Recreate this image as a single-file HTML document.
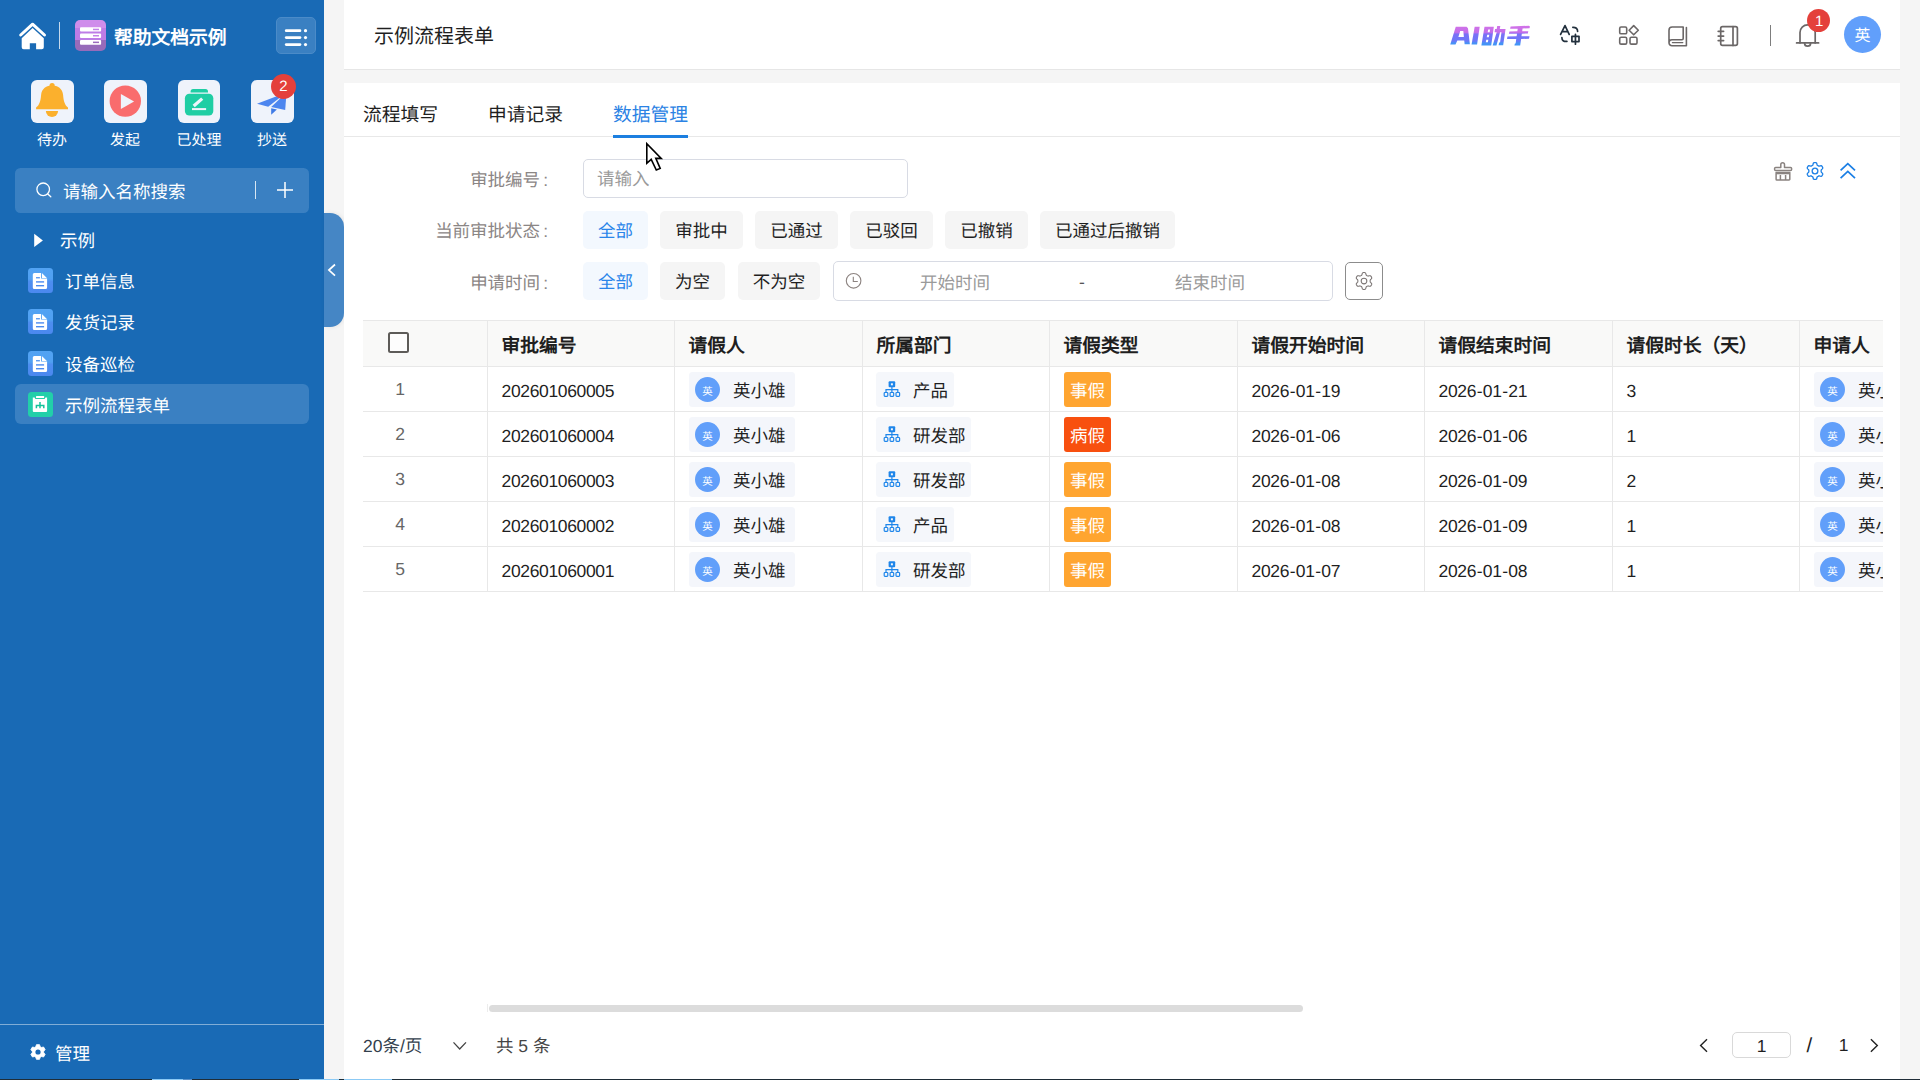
<!DOCTYPE html>
<html lang="zh-CN">
<head>
<meta charset="utf-8">
<title>示例流程表单</title>
<style>
*{box-sizing:border-box;margin:0;padding:0}
html,body{width:1920px;height:1080px;overflow:hidden;background:#f5f5f5;font-family:"Liberation Sans",sans-serif;color:#1f1f1f;font-size:17.5px;text-rendering:geometricPrecision}
.a{position:absolute;white-space:nowrap}
svg{display:block;overflow:visible}
/* ---------- sidebar ---------- */
#side{position:absolute;left:0;top:0;width:324px;height:1080px;background:#196ab5;color:#fff}
#side .t{position:absolute;white-space:nowrap;color:#fff}
.tile{position:absolute;top:80px;width:42.5px;height:43px;border-radius:6px;background:#eff3fb}
.qlab{position:absolute;top:130px;width:80px;text-align:center;font-size:15px;line-height:22px;color:#fff}
.mi{position:absolute;left:28px;width:25px;height:25px;border-radius:3.5px;background:linear-gradient(180deg,#52a3f3 0,#50a0f2 44%,#4d8ef0 54%,#4b88ef 100%)}
.mt{position:absolute;left:65px;font-size:17.5px;line-height:26px;color:#fff;white-space:nowrap}
/* ---------- main ---------- */
#hdr{position:absolute;left:344px;top:0;width:1556px;height:70px;background:#fff;border-bottom:1px solid #e6e6e6}
#panel{position:absolute;left:344px;top:83px;width:1556px;height:997px;background:#fff}
.tab{position:absolute;top:102px;font-size:18.75px;line-height:26px;color:#1f1f1f;white-space:nowrap}
.flab{position:absolute;left:380px;width:168px;text-align:right;font-size:17.5px;line-height:26px;color:#8b8685;white-space:nowrap}
.cl{margin-left:3px}
.chip{position:absolute;height:38px;border-radius:5px;background:#f5f5f5;color:#1f1f1f;font-size:17.5px;line-height:40px;text-align:center;white-space:nowrap}
.chip.on{background:#f3f8fe;color:#2a85ea}
/* ---------- table ---------- */
#tbl{position:absolute;left:363px;top:320px;width:1520px;height:272px;overflow:hidden}
.th{position:absolute;top:0;height:47px;background:#f9f9f8;border-top:1px solid #e8e8e8;border-bottom:1px solid #e8e8e8;border-right:1px solid #e8e8e8;font-weight:bold;font-size:18.75px;line-height:50px;padding-left:13.5px;color:#1f1f1f;white-space:nowrap}
.tr{position:absolute;left:0;width:1700px;height:45px;border-bottom:1px solid #e8e8e8}
.td{position:absolute;top:0;height:44px;border-right:1px solid #e8e8e8;font-size:17.5px;line-height:49px;padding-left:13.5px;color:#1f1f1f;white-space:nowrap}
.num{letter-spacing:-0.35px}
.num i{font-style:normal;margin:0 .65px}
.uchip{position:absolute;top:5px;left:14px;width:105.5px;height:34.5px;border-radius:3.5px;background:#f4f6fb}
.uchip i{position:absolute;left:6px;top:5px;width:25px;height:25px;border-radius:50%;background:#619ffa;color:#fff;font-style:normal;font-size:10.5px;line-height:31px;text-align:center}
.uchip b{position:absolute;left:44px;top:0;font-weight:normal;font-size:17.5px;line-height:39px;color:#1f1f1f}
.dchip{position:absolute;top:5px;left:13px;height:34.5px;border-radius:3.5px;background:#f5f7fb}
.org{position:absolute;left:7.2px;top:9px;width:18px;height:17px}
.dchip b{position:absolute;left:37px;top:0;font-weight:normal;font-size:17.5px;line-height:39px;color:#1f1f1f}
.tag{position:absolute;top:5px;left:14px;width:47px;height:35px;border-radius:3px;background:#ffa530;color:#fff;font-size:17.5px;line-height:39px;text-align:center}
.tag.r{background:#f8500f}
</style>
</head>
<body>

<svg width="0" height="0" style="position:absolute">
  <defs>
    <symbol id="org" viewBox="0 0 18 17" overflow="visible">
      <rect x="5.6" y="0.2" width="6.6" height="6" rx="1" fill="#1f86ea"/>
      <rect x="7.9" y="2.3" width="2" height="2" fill="#f5f7fb"/>
      <path d="M8.9 6 V8.6 M3 11.2 V8.6 H14.8 V11.2 M8.9 8.6 V11.2" fill="none" stroke="#1f86ea" stroke-width="1.2"/>
      <rect x="1.2" y="11.5" width="3.6" height="3.9" rx=".8" fill="#f5f7fb" stroke="#1f86ea" stroke-width="1.2"/>
      <rect x="7.1" y="11.5" width="3.6" height="3.9" rx=".8" fill="#f5f7fb" stroke="#1f86ea" stroke-width="1.2"/>
      <rect x="13" y="11.5" width="3.6" height="3.9" rx=".8" fill="#f5f7fb" stroke="#1f86ea" stroke-width="1.2"/>
    </symbol>
    <symbol id="gearo" viewBox="-10 -10 20 20" overflow="visible">
      <path d="M6.15 0.00 L6.15 -0.40 L6.17 -0.81 L6.37 -1.27 L7.05 -1.89 L7.68 -2.61 L7.74 -3.21 L7.57 -3.73 L7.32 -4.22 L7.02 -4.69 L6.65 -5.10 L6.10 -5.35 L5.16 -5.16 L4.28 -4.88 L3.79 -4.94 L3.42 -5.12 L3.08 -5.33 L2.73 -5.53 L2.38 -5.75 L2.09 -6.15 L1.89 -7.05 L1.58 -7.95 L1.09 -8.31 L0.55 -8.42 L0.00 -8.45 L-0.55 -8.42 L-1.09 -8.31 L-1.58 -7.95 L-1.89 -7.05 L-2.09 -6.15 L-2.38 -5.75 L-2.73 -5.53 L-3.07 -5.33 L-3.42 -5.12 L-3.79 -4.94 L-4.28 -4.88 L-5.16 -5.16 L-6.10 -5.35 L-6.65 -5.10 L-7.02 -4.69 L-7.32 -4.22 L-7.57 -3.73 L-7.74 -3.21 L-7.68 -2.61 L-7.05 -1.89 L-6.37 -1.27 L-6.17 -0.81 L-6.15 -0.40 L-6.15 -0.00 L-6.15 0.40 L-6.17 0.81 L-6.37 1.27 L-7.05 1.89 L-7.68 2.61 L-7.74 3.21 L-7.57 3.73 L-7.32 4.22 L-7.02 4.69 L-6.65 5.10 L-6.10 5.35 L-5.16 5.16 L-4.28 4.88 L-3.79 4.94 L-3.42 5.12 L-3.08 5.33 L-2.73 5.53 L-2.38 5.75 L-2.09 6.15 L-1.89 7.05 L-1.58 7.95 L-1.09 8.31 L-0.55 8.42 L-0.00 8.45 L0.55 8.42 L1.09 8.31 L1.58 7.95 L1.89 7.05 L2.09 6.15 L2.38 5.75 L2.73 5.53 L3.08 5.33 L3.42 5.12 L3.79 4.94 L4.28 4.88 L5.16 5.16 L6.10 5.35 L6.65 5.10 L7.02 4.69 L7.32 4.23 L7.57 3.73 L7.74 3.21 L7.68 2.61 L7.05 1.89 L6.37 1.27 L6.17 0.81 L6.15 0.40Z" fill="none" stroke="currentColor" stroke-linejoin="round"/>
      <circle cx="0" cy="0" r="2.85" fill="none" stroke="currentColor"/>
    </symbol>
    <symbol id="doc" viewBox="0 0 25 25" overflow="visible">
      <path d="M6.3 5.1 H13 V10.6 H19.1 V19.6 a1.5 1.5 0 0 1 -1.5 1.5 H6.3 a1.5 1.5 0 0 1 -1.5 -1.5 V6.6 a1.5 1.5 0 0 1 1.5 -1.5 Z" fill="#fff"/>
      <path d="M13.9 5.1 L18.9 10 H13.9 Z" fill="#fff"/>
      <rect x="8" y="9.1" width="3.9" height="1.3" fill="#4f93f1"/>
      <rect x="8" y="13.2" width="8.1" height="1.4" fill="#4c8bf0"/>
      <rect x="8" y="17" width="8.1" height="1.4" fill="#4c8bf0"/>
    </symbol>
  </defs>
</svg>

<!-- ================= SIDEBAR ================= -->
<div id="side">
  <div class="t" style="left:114px;top:24px;font-size:18.75px;font-weight:bold;line-height:28px">帮助文档示例</div>
  <div class="a" style="left:59px;top:22px;width:1px;height:27px;background:rgba(255,255,255,.75)"></div>
  <div class="a" style="left:276px;top:17px;width:40px;height:37px;border-radius:5px;background:#3a80c2;border:1px solid #4b8bc8"></div>

  <div class="tile" style="left:31px"></div>
  <div class="tile" style="left:104.3px"></div>
  <div class="tile" style="left:177.7px"></div>
  <div class="tile" style="left:251px"></div>
  <div class="qlab" style="left:12px">待办</div>
  <div class="qlab" style="left:85px">发起</div>
  <div class="qlab" style="left:159px">已处理</div>
  <div class="qlab" style="left:232px">抄送</div>
  <div class="a" style="left:271px;top:74px;width:25px;height:25px;border-radius:50%;background:#e4403b;color:#fff;font-size:15px;line-height:25px;text-align:center;z-index:5">2</div>

  <div class="a" style="left:15px;top:168px;width:294px;height:45px;border-radius:5.5px;background:#3a80c2"></div>
  <div class="t" style="left:63px;top:179px;font-size:17.5px;line-height:26px">请输入名称搜索</div>
  <div class="a" style="left:255px;top:181px;width:1px;height:18px;background:rgba(255,255,255,.8)"></div>

  <div class="t" style="left:60px;top:228px;font-size:17.5px;line-height:26px">示例</div>

  <div class="a" style="left:15px;top:384px;width:294px;height:40px;border-radius:6px;background:#3a80c2"></div>
  <div class="mi" style="top:268px"><svg width="25" height="25"><use href="#doc"/></svg></div><div class="mt" style="top:269px">订单信息</div>
  <div class="mi" style="top:309px"><svg width="25" height="25"><use href="#doc"/></svg></div><div class="mt" style="top:310px">发货记录</div>
  <div class="mi" style="top:351px"><svg width="25" height="25"><use href="#doc"/></svg></div><div class="mt" style="top:352px">设备巡检</div>
  <div class="mi" style="top:392px;background:#22cfa9"><svg width="25" height="25" viewBox="0 0 25 25"><rect x="8" y="4" width="8.1" height="1.9" rx=".5" fill="#fff"/><path d="M4.8 5.6 L6.6 5.6 L7.4 7 H16.6 L17.4 5.6 L19.1 5.6 V19 a1 1 0 0 1 -1 1 H5.8 a1 1 0 0 1 -1 -1 Z" fill="#fff"/><path d="M12 10 V16.2 M8.4 16.2 V13.4 H15.8 V16.2" fill="none" stroke="#14c39b" stroke-width="1.5"/></svg></div><div class="mt" style="top:393px">示例流程表单</div>


  <!-- home -->
  <svg class="a" style="left:18px;top:22px" width="29" height="28" viewBox="0 0 29 28">
    <polyline points="2.7,13 14.6,2.2 26.5,13" fill="none" stroke="#fff" stroke-width="3" stroke-linecap="round" stroke-linejoin="round"/>
    <path d="M14.6 6 L25.8 16.2 V25.3 a2 2 0 0 1 -2 2 H18.1 V21.2 H11.8 V27.3 H5.7 a2 2 0 0 1 -2 -2 V16.2 Z" fill="#fff"/>
  </svg>
  <!-- app icon -->
  <div class="a" style="left:75px;top:20px;width:31px;height:31px;border-radius:5px;background:linear-gradient(180deg,#cf8deb 0,#cf8deb 26%,#bd7ce6 26%,#bd7ce6 64%,#976bba 64%,#976bba 100%)">
    <svg width="31" height="31" viewBox="0 0 31 31">
      <rect x="5" y="7.2" width="21.1" height="4.4" rx="1" fill="#fff"/>
      <rect x="5" y="13.5" width="21.1" height="4.5" rx="1" fill="#fff"/>
      <rect x="5" y="20" width="21.1" height="4.7" rx="1" fill="#fff"/>
      <rect x="18" y="8.7" width="6" height="1.5" fill="#c383e8"/>
      <rect x="18" y="15" width="6" height="1.5" fill="#c383e8"/>
      <rect x="18" y="21.6" width="6" height="1.5" fill="#9a6cbd"/>
    </svg>
  </div>
  <!-- toggle -->
  <svg class="a" style="left:276px;top:17px" width="40" height="37" viewBox="0 0 40 37">
    <g stroke="#fff" stroke-width="2.7" stroke-linecap="round">
      <line x1="10.2" y1="13.7" x2="24" y2="13.7"/><line x1="10.2" y1="20.6" x2="24" y2="20.6"/><line x1="10.2" y1="27.6" x2="24" y2="27.6"/>
    </g>
    <circle cx="29.5" cy="13.7" r="1.6" fill="#fff"/><circle cx="29.5" cy="20.6" r="1.6" fill="#fff"/><circle cx="29.5" cy="27.6" r="1.6" fill="#fff"/>
  </svg>
  <!-- bell -->
  <svg class="a" style="left:31px;top:80px" width="43" height="43" viewBox="0 0 43 43">
    <circle cx="21.1" cy="5.6" r="2.6" fill="#fbb02d"/>
    <path d="M5.1 29.3 L5.1 27.6 C8.5 25 9.6 21 10.1 15 C10.6 8.5 15.5 5.5 21.1 5.5 C26.7 5.5 31.6 8.5 32.1 15 C32.6 21 33.7 25 37 27.6 L37 29.3 Z" fill="#fbb02d"/>
    <path d="M14.9 31 H27.1 A6.1 6.1 0 0 1 14.9 31 Z" fill="#fbb02d"/>
  </svg>
  <!-- play -->
  <svg class="a" style="left:104px;top:80px" width="43" height="43" viewBox="0 0 43 43">
    <circle cx="21.3" cy="21.1" r="15.7" fill="#f96c6d"/>
    <path d="M16.9 14.1 V28.9 L30.1 21.5 Z" fill="#eff3fb"/>
  </svg>
  <!-- done -->
  <svg class="a" style="left:178px;top:80px" width="43" height="43" viewBox="0 0 43 43">
    <path d="M12.6 12.6 V11.4 a2.5 2.5 0 0 1 2.5 -2.5 H27.5 a2.5 2.5 0 0 1 2.5 2.5 V12.6 Z" fill="#1fcea4"/>
    <rect x="6.9" y="13.7" width="28.4" height="21.9" rx="4.5" fill="#1fcea4"/>
    <line x1="15.7" y1="26" x2="24.2" y2="18.6" stroke="#f0f4fb" stroke-width="3.2"/>
    <rect x="14" y="28.1" width="14.1" height="2" fill="#f0f4fb"/>
  </svg>
  <!-- send -->
  <svg class="a" style="left:251px;top:80px" width="43" height="43" viewBox="0 0 43 43">
    <path d="M6 23.7 L35.5 12.5 L17.2 26.8 Z" fill="#4d86ef"/>
    <path d="M35.5 12.5 L34.2 30 L20.2 27 Z" fill="#4d86ef"/>
    <path d="M20.2 28.2 L25.9 29.4 L20.2 34.8 Z" fill="#3f7be6"/>
  </svg>
  <!-- search + plus -->
  <svg class="a" style="left:30px;top:178px" width="30" height="26" viewBox="0 0 30 26">
    <circle cx="13.2" cy="11.3" r="6.3" fill="none" stroke="#fff" stroke-width="1.3"/>
    <line x1="17.8" y1="16" x2="20.8" y2="18.8" stroke="#fff" stroke-width="1.3" stroke-linecap="round"/>
  </svg>
  <svg class="a" style="left:275px;top:180px" width="20" height="20" viewBox="0 0 20 20">
    <path d="M2 10 H18 M10 2 V18" stroke="#fff" stroke-width="1.5" fill="none"/>
  </svg>
  <!-- tree arrow -->
  <svg class="a" style="left:30px;top:230px" width="20" height="20" viewBox="0 0 20 20"><path d="M4.2 3.7 V17 L12.9 10.4 Z" fill="#fff"/></svg>
  <!-- gear bottom -->
  <svg class="a" style="left:29px;top:1043px" width="18" height="18" viewBox="-10 -10 20 20"><path d="M2.36 -5.95 L1.73 -8.12 L-1.73 -8.12 L-2.36 -5.95 L-3.98 -5.02 L-6.17 -5.55 L-7.89 -2.56 L-6.33 -0.93 L-6.33 0.93 L-7.89 2.56 L-6.17 5.55 L-3.98 5.02 L-2.36 5.95 L-1.73 8.12 L1.73 8.12 L2.36 5.95 L3.98 5.02 L6.17 5.55 L7.89 2.56 L6.33 0.93 L6.33 -0.93 L7.89 -2.56 L6.17 -5.55 L3.98 -5.02Z" fill="#fff" stroke="#fff" stroke-width="1" stroke-linejoin="round"/><circle cx="0" cy="0" r="2.9" fill="#1969b6"/></svg>
  <div class="a" style="left:0;top:1024px;width:324px;height:1px;background:rgba(255,255,255,.45)"></div>
  <div class="t" style="left:55px;top:1041px;font-size:17.5px;line-height:26px">管理</div>
</div>

<!-- collapse handle -->
<div class="a" style="left:324px;top:213px;width:20px;height:114px;border-radius:0 14px 14px 0;background:#4586c5;box-shadow:1px 0 4px rgba(0,0,0,.08)"></div>

<!-- ================= HEADER ================= -->
<div id="hdr"></div>
<div class="a" style="left:374px;top:23px;font-size:20px;line-height:28px;color:#1f1f1f">示例流程表单</div>
<div class="a" style="left:1770px;top:25px;width:1px;height:21px;background:#7d7d7d"></div>
<div class="a" style="left:1844px;top:16px;width:37px;height:37px;border-radius:50%;background:#619ffb;color:#fff;font-size:16px;line-height:42px;text-align:center">英</div>
<div class="a" style="left:1807.1px;top:9.2px;width:23px;height:23px;border-radius:50%;background:#e4403b;color:#fff;font-size:15px;line-height:26px;text-align:center;z-index:3;padding-left:1px">1</div>


<!-- AI logo -->
<svg class="a" style="left:1444px;top:18px" width="92" height="34" viewBox="0 0 1920 710">
  <defs><linearGradient id="ag" gradientUnits="userSpaceOnUse" x1="0" y1="165" x2="0" y2="575">
    <stop offset="0" stop-color="#d272e8"/><stop offset=".33" stop-color="#c26ee9"/><stop offset=".42" stop-color="#7a70f6"/><stop offset=".78" stop-color="#6a78f8"/><stop offset=".86" stop-color="#4a90f6"/><stop offset="1" stop-color="#3f98f6"/></linearGradient></defs>
  <g fill="url(#ag)" fill-rule="evenodd">
    <path d="M245 185 L470 185 L500 215 L540 550 L430 550 L422 470 L278 470 L240 555 L130 555 Z M338 270 L403 270 L415 395 L300 395 Z"/>
    <path d="M640 185 L745 185 L690 555 L575 555 Z"/>
    <path d="M845 185 L1040 185 L985 575 L780 575 Z M922 240 L962 240 L952 300 L912 300 Z M902 350 L945 350 L935 402 L892 402 Z M882 455 L925 455 L915 507 L872 507 Z"/>
    <path d="M1110 165 L1175 165 L1165 230 L1285 230 L1275 295 L1235 570 L1140 570 L1150 510 L1170 510 L1200 295 L1170 295 L1095 575 L1015 575 L1100 295 L1055 295 L1065 230 L1100 230 Z"/>
    <path d="M1390 180 L1770 160 L1795 175 L1785 215 L1640 218 L1632 277 L1760 275 L1750 325 L1625 327 L1617 383 L1785 380 L1775 435 L1610 437 L1590 575 L1470 575 L1480 530 L1495 530 L1508 438 L1315 440 L1325 385 L1516 383 L1524 328 L1355 330 L1365 280 L1531 278 L1539 222 L1380 225 Z"/>
  </g>
</svg>
<!-- translate -->
<svg class="a" style="left:1555px;top:20px" width="30" height="30" viewBox="0 0 30 30">
  <g fill="none" stroke="#22303d" stroke-width="1.7" stroke-linecap="round" stroke-linejoin="round">
    <path d="M5.6 14.4 L10 5.6 L14.2 14.4 M7 11.6 H12.8"/>
    <path d="M17.8 7.3 C20.8 7.1 22.7 8.6 22.6 11.4"/>
    <path d="M6.9 17.6 C6.8 20.4 8.8 21.8 11.9 21.4"/>
    <path d="M16.9 16.3 H24 V21.6 H16.9 Z M20.45 14.3 V24.2"/>
  </g>
</svg>
<!-- grid -->
<svg class="a" style="left:1613px;top:20px" width="30" height="30" viewBox="0 0 30 30">
  <g fill="none" stroke="#6b6767" stroke-width="1.6" stroke-linejoin="round">
    <rect x="6.7" y="7" width="7" height="6.8" rx="1.4"/>
    <rect x="6.7" y="17.3" width="7" height="6.8" rx="1.4"/>
    <rect x="17" y="17.3" width="7" height="6.8" rx="1.4"/>
    <path d="M20.7 5.6 L25.3 10.2 L20.7 14.8 L16.1 10.2 Z"/>
  </g>
</svg>
<!-- book -->
<svg class="a" style="left:1663px;top:20px" width="30" height="30" viewBox="0 0 30 30">
  <g fill="none" stroke="#6b6767" stroke-width="1.6" stroke-linecap="round" stroke-linejoin="round">
    <path d="M23.4 7.5 V25.7 H9 a3 3 0 0 1 0 -6 H19 a1.2 1.2 0 0 0 1.2 -1.2 V7 H9.2 a3.2 3.2 0 0 0 -3.2 3.2 V22.7"/>
    <path d="M9.4 22.6 H19.8" stroke-width="1.3"/>
  </g>
</svg>
<!-- notebook -->
<svg class="a" style="left:1713px;top:20px" width="30" height="30" viewBox="0 0 30 30">
  <g fill="none" stroke="#6b6767" stroke-width="1.7" stroke-linecap="round" stroke-linejoin="round">
    <rect x="7.7" y="6.6" width="16.7" height="18.8" rx="1.8"/>
    <path d="M20 6.6 V25.4"/>
    <path d="M5.2 11.3 H10.6 M5.2 16.1 H10.6 M5.2 20.6 H10.6"/>
  </g>
</svg>
<!-- bell -->
<svg class="a" style="left:1792px;top:18px" width="32" height="32" viewBox="0 0 32 32">
  <g fill="none" stroke="#6b6767" stroke-width="1.7" stroke-linecap="round">
    <path d="M4.6 24.9 H26.6"/>
    <path d="M8 24.9 V14.4 a7.6 7.6 0 0 1 15.2 0 V24.9"/>
    <path d="M12.6 25.2 a3 3 0 0 0 6 0"/>
  </g>
</svg>
<!-- ================= PANEL ================= -->
<div id="panel"></div>
<div class="a" style="left:344px;top:136px;width:1556px;height:1px;background:#e8e8e8"></div>
<div class="tab" style="left:363px">流程填写</div>
<div class="tab" style="left:488px">申请记录</div>
<div class="tab" style="left:613px;color:#2a82e4">数据管理</div>
<div class="a" style="left:613px;top:135px;width:75px;height:3px;background:#1c7fe0"></div>

<!-- filters -->
<div class="flab" style="top:167px">审批编号<span class="cl">:</span></div>
<div class="a" style="left:583px;top:159px;width:325px;height:39px;border:1px solid #d8dbe4;border-radius:5px;background:#fff"></div>
<div class="a" style="left:597px;top:166px;font-size:17.5px;line-height:26px;color:#9a9a9a">请输入</div>

<div class="flab" style="top:218px">当前审批状态<span class="cl">:</span></div>
<div class="chip on" style="left:583px;top:211px;width:65px">全部</div>
<div class="chip" style="left:660px;top:211px;width:83px">审批中</div>
<div class="chip" style="left:755px;top:211px;width:83px">已通过</div>
<div class="chip" style="left:850px;top:211px;width:83px">已驳回</div>
<div class="chip" style="left:945px;top:211px;width:83px">已撤销</div>
<div class="chip" style="left:1040px;top:211px;width:135px">已通过后撤销</div>

<div class="flab" style="top:270px">申请时间<span class="cl">:</span></div>
<div class="chip on" style="left:583px;top:262px;width:65px">全部</div>
<div class="chip" style="left:660px;top:262px;width:65px">为空</div>
<div class="chip" style="left:738px;top:262px;width:82px">不为空</div>
<div class="a" style="left:833px;top:261px;width:500px;height:40px;border:1px solid #d8dbe4;border-radius:5px;background:#fff"></div>
<div class="a" style="left:920px;top:270px;font-size:17.5px;line-height:26px;color:#9a9a9a">开始时间</div>
<div class="a" style="left:1079px;top:269px;font-size:17.5px;line-height:26px;color:#555">-</div>
<div class="a" style="left:1175px;top:270px;font-size:17.5px;line-height:26px;color:#9a9a9a">结束时间</div>
<div class="a" style="left:1345px;top:262px;width:38px;height:38px;border:1px solid #8c8c8c;border-radius:5px;background:#fff"></div>


<!-- broom -->
<svg class="a" style="left:1770px;top:158px" width="26" height="26" viewBox="0 0 26 26">
  <g fill="none" stroke="#8a8380" stroke-width="1.5" stroke-linejoin="round">
    <path d="M10.8 9.4 V6.6 a1.85 1.85 0 0 1 3.7 0 V9.4 H20.6 a1 1 0 0 1 1 1 V11.4 a1 1 0 0 1 -1 1 H5.6 a1 1 0 0 1 -1 -1 V10.4 a1 1 0 0 1 1 -1 Z"/>
    <path d="M6.1 14.4 H19.8 V21.2 a.8 .8 0 0 1 -.8 .8 H6.9 a.8 .8 0 0 1 -.8 -.8 Z"/>
    <path d="M6.1 15.2 H19.8" stroke-width="2.2"/>
    <path d="M10.4 17 V22 M15.6 17 V22"/>
  </g>
</svg>
<!-- gear blue -->
<svg class="a" style="left:1804.7px;top:160.8px;color:#1b7fe5;stroke-width:1.3" width="20" height="20"><use href="#gearo"/></svg>
<!-- dbl chevron -->
<svg class="a" style="left:1836px;top:158px" width="24" height="24" viewBox="0 0 24 24">
  <path d="M4.6 12.4 L11.8 5.6 L19 12.4 M4.6 20.2 L11.8 13.4 L19 20.2" fill="none" stroke="#1b7fe5" stroke-width="1.7"/>
</svg>
<!-- clock -->
<svg class="a" style="left:843px;top:270px" width="22" height="22" viewBox="0 0 22 22">
  <circle cx="10.6" cy="10.8" r="7.3" fill="none" stroke="#8c8380" stroke-width="1.1"/>
  <path d="M10.3 6.8 V11.5 H14.8" fill="none" stroke="#8c8380" stroke-width="1.1"/>
</svg>
<!-- gear gray in button -->
<svg class="a" style="left:1353.9px;top:270.8px;color:#7a7473;stroke-width:1.05" width="20" height="20"><use href="#gearo"/></svg>
<!-- checkbox -->
<div class="a" style="left:387.5px;top:332px;width:21px;height:21px;border:2.4px solid #5d5b58;border-radius:2.5px;background:#fdfdfd;z-index:2"></div>
<!-- pagination chevrons -->
<svg class="a" style="left:450px;top:1036px" width="20" height="20" viewBox="0 0 20 20"><path d="M3.5 6.4 L9.7 13 L16 6.4" fill="none" stroke="#444" stroke-width="1.3"/></svg>
<svg class="a" style="left:1694px;top:1035px" width="20" height="20" viewBox="0 0 20 20"><path d="M13 4.3 L6.6 10.5 L13 16.8" fill="none" stroke="#222" stroke-width="1.4"/></svg>
<svg class="a" style="left:1864px;top:1035px" width="20" height="20" viewBox="0 0 20 20"><path d="M6.9 4.3 L13.3 10.5 L6.9 16.8" fill="none" stroke="#222" stroke-width="1.4"/></svg>
<!-- handle chevron -->
<svg class="a" style="left:324px;top:260px" width="20" height="20" viewBox="0 0 20 20"><path d="M11 4.5 L4.9 10 L11 15.7" fill="none" stroke="#fff" stroke-width="1.7"/></svg>
<!-- mouse cursor -->
<svg class="a" style="left:644px;top:140px;z-index:9" width="24" height="34" viewBox="0 0 24 34">
  <path d="M2.8 3.8 L2.8 23.3 L7.2 19.3 L12.3 30 L16.2 28.4 L11.8 18.4 L17.2 18.4 Z" fill="#fff" stroke="#000" stroke-width="1.6" stroke-linejoin="miter"/>
</svg>
<!-- ================= TABLE ================= -->
<div id="tbl">
  <div class="th" style="left:0;width:125px"></div>
  <div class="th" style="left:125px;width:187px">审批编号</div>
  <div class="th" style="left:312px;width:188px">请假人</div>
  <div class="th" style="left:500px;width:187px">所属部门</div>
  <div class="th" style="left:687px;width:188px">请假类型</div>
  <div class="th" style="left:875px;width:187px">请假开始时间</div>
  <div class="th" style="left:1062px;width:188px">请假结束时间</div>
  <div class="th" style="left:1250px;width:187px">请假时长（天）</div>
  <div class="th" style="left:1437px;width:188px">申请人</div>
<!--ROWS-->
  <div class="tr" style="top:47px">
    <div class="td" style="left:0;width:125px;padding:0;text-align:center;color:#666;padding-right:50px;line-height:44px">1</div>
    <div class="td num" style="left:125px;width:187px">202601060005</div>
    <div class="td" style="left:312px;width:188px"><div class="uchip"><i>英</i><b>英小雄</b></div></div>
    <div class="td" style="left:500px;width:187px"><div class="dchip" style="width:78px"><svg class="org"><use href="#org"/></svg><b>产品</b></div></div>
    <div class="td" style="left:687px;width:188px"><div class="tag">事假</div></div>
    <div class="td num" style="left:875px;width:187px">2026<i>-</i>01<i>-</i>19</div>
    <div class="td num" style="left:1062px;width:188px">2026<i>-</i>01<i>-</i>21</div>
    <div class="td num" style="left:1250px;width:187px">3</div>
    <div class="td" style="left:1437px;width:188px"><div class="uchip"><i>英</i><b>英小雄</b></div></div>
  </div>
  <div class="tr" style="top:92px">
    <div class="td" style="left:0;width:125px;padding:0;text-align:center;color:#666;padding-right:50px;line-height:44px">2</div>
    <div class="td num" style="left:125px;width:187px">202601060004</div>
    <div class="td" style="left:312px;width:188px"><div class="uchip"><i>英</i><b>英小雄</b></div></div>
    <div class="td" style="left:500px;width:187px"><div class="dchip" style="width:95px"><svg class="org"><use href="#org"/></svg><b>研发部</b></div></div>
    <div class="td" style="left:687px;width:188px"><div class="tag r">病假</div></div>
    <div class="td num" style="left:875px;width:187px">2026<i>-</i>01<i>-</i>06</div>
    <div class="td num" style="left:1062px;width:188px">2026<i>-</i>01<i>-</i>06</div>
    <div class="td num" style="left:1250px;width:187px">1</div>
    <div class="td" style="left:1437px;width:188px"><div class="uchip"><i>英</i><b>英小雄</b></div></div>
  </div>
  <div class="tr" style="top:137px">
    <div class="td" style="left:0;width:125px;padding:0;text-align:center;color:#666;padding-right:50px;line-height:44px">3</div>
    <div class="td num" style="left:125px;width:187px">202601060003</div>
    <div class="td" style="left:312px;width:188px"><div class="uchip"><i>英</i><b>英小雄</b></div></div>
    <div class="td" style="left:500px;width:187px"><div class="dchip" style="width:95px"><svg class="org"><use href="#org"/></svg><b>研发部</b></div></div>
    <div class="td" style="left:687px;width:188px"><div class="tag">事假</div></div>
    <div class="td num" style="left:875px;width:187px">2026<i>-</i>01<i>-</i>08</div>
    <div class="td num" style="left:1062px;width:188px">2026<i>-</i>01<i>-</i>09</div>
    <div class="td num" style="left:1250px;width:187px">2</div>
    <div class="td" style="left:1437px;width:188px"><div class="uchip"><i>英</i><b>英小雄</b></div></div>
  </div>
  <div class="tr" style="top:182px">
    <div class="td" style="left:0;width:125px;padding:0;text-align:center;color:#666;padding-right:50px;line-height:44px">4</div>
    <div class="td num" style="left:125px;width:187px">202601060002</div>
    <div class="td" style="left:312px;width:188px"><div class="uchip"><i>英</i><b>英小雄</b></div></div>
    <div class="td" style="left:500px;width:187px"><div class="dchip" style="width:78px"><svg class="org"><use href="#org"/></svg><b>产品</b></div></div>
    <div class="td" style="left:687px;width:188px"><div class="tag">事假</div></div>
    <div class="td num" style="left:875px;width:187px">2026<i>-</i>01<i>-</i>08</div>
    <div class="td num" style="left:1062px;width:188px">2026<i>-</i>01<i>-</i>09</div>
    <div class="td num" style="left:1250px;width:187px">1</div>
    <div class="td" style="left:1437px;width:188px"><div class="uchip"><i>英</i><b>英小雄</b></div></div>
  </div>
  <div class="tr" style="top:227px">
    <div class="td" style="left:0;width:125px;padding:0;text-align:center;color:#666;padding-right:50px;line-height:44px">5</div>
    <div class="td num" style="left:125px;width:187px">202601060001</div>
    <div class="td" style="left:312px;width:188px"><div class="uchip"><i>英</i><b>英小雄</b></div></div>
    <div class="td" style="left:500px;width:187px"><div class="dchip" style="width:95px"><svg class="org"><use href="#org"/></svg><b>研发部</b></div></div>
    <div class="td" style="left:687px;width:188px"><div class="tag">事假</div></div>
    <div class="td num" style="left:875px;width:187px">2026<i>-</i>01<i>-</i>07</div>
    <div class="td num" style="left:1062px;width:188px">2026<i>-</i>01<i>-</i>08</div>
    <div class="td num" style="left:1250px;width:187px">1</div>
    <div class="td" style="left:1437px;width:188px"><div class="uchip"><i>英</i><b>英小雄</b></div></div>
  </div>
<!--/ROWS-->
</div>

<!-- h scrollbar -->
<div class="a" style="left:487px;top:1004px;width:1px;height:8px;background:#ececec"></div>
<div class="a" style="left:488.5px;top:1005px;width:814px;height:7px;border-radius:3.5px;background:#dcdcdc"></div>

<!-- pagination -->
<div class="a" style="left:363px;top:1033px;font-size:17.5px;line-height:26px;color:#333f4d">20条/页</div>
<div class="a" style="left:496px;top:1033px;font-size:17.5px;line-height:26px;color:#444">共 5 条</div>
<div class="a" style="left:1732px;top:1032px;width:59px;height:26px;border:1px solid #d9d9d9;border-radius:5px;background:#fff;font-size:17.5px;line-height:26px;text-align:center;color:#1f1f1f">1</div>
<div class="a" style="left:1806.5px;top:1033px;font-size:20.5px;line-height:26px;color:#1f1f1f">/</div>
<div class="a" style="left:1838.7px;top:1032px;font-size:17.5px;line-height:27px;color:#1f1f1f">1</div>

<!-- taskbar sliver -->
<div class="a" style="left:0;top:1079px;width:1920px;height:1px;background:#1f2d38;z-index:20"></div>
<div class="a" style="left:152px;top:1079px;width:31px;height:1px;background:#8ccaf5;z-index:21"></div>
<div class="a" style="left:183px;top:1079px;width:9px;height:1px;background:#5a8fc7;z-index:21"></div>
<div class="a" style="left:299px;top:1079px;width:40px;height:1px;background:#8ccaf5;z-index:21"></div>
<div class="a" style="left:344px;top:1079px;width:48px;height:1px;background:#8ccaf5;z-index:21"></div>

</body>
</html>
